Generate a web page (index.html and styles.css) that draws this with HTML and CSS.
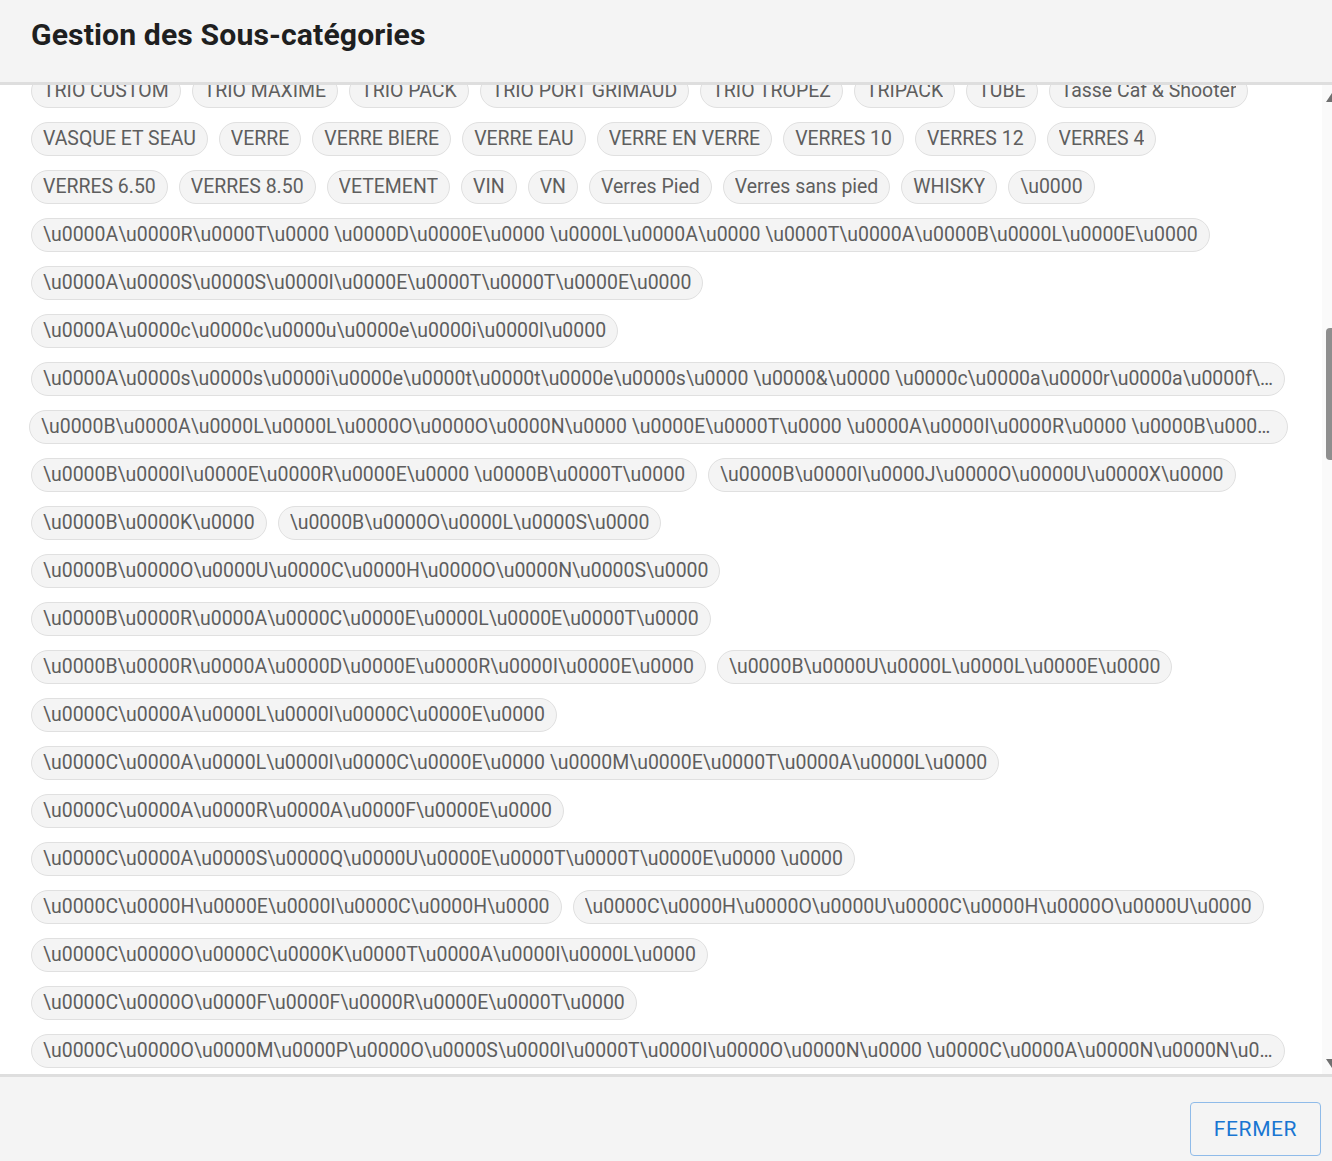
FILE: index.html
```html
<!DOCTYPE html>
<html lang="fr">
<head>
<meta charset="utf-8">
<title>Gestion des Sous-catégories</title>
<link rel="stylesheet" href="styles.css">
</head>
<body>
<div class="dialog">
  <header class="dialog-header">
    <h2 class="dialog-title">Gestion des Sous-catégories</h2>
  </header>
  <main class="dialog-content">
    <div class="chip-list">
      <div class="chip"><span class="chip-label">TRIO CUSTOM</span></div>
      <div class="chip"><span class="chip-label">TRIO MAXIME</span></div>
      <div class="chip"><span class="chip-label">TRIO PACK</span></div>
      <div class="chip"><span class="chip-label">TRIO PORT GRIMAUD</span></div>
      <div class="chip"><span class="chip-label">TRIO TROPEZ</span></div>
      <div class="chip"><span class="chip-label">TRIPACK</span></div>
      <div class="chip"><span class="chip-label">TUBE</span></div>
      <div class="chip"><span class="chip-label">Tasse Caf &amp; Shooter</span></div>
      <div class="chip"><span class="chip-label">VASQUE ET SEAU</span></div>
      <div class="chip"><span class="chip-label">VERRE</span></div>
      <div class="chip"><span class="chip-label">VERRE BIERE</span></div>
      <div class="chip"><span class="chip-label">VERRE EAU</span></div>
      <div class="chip"><span class="chip-label">VERRE EN VERRE</span></div>
      <div class="chip"><span class="chip-label">VERRES 10</span></div>
      <div class="chip"><span class="chip-label">VERRES 12</span></div>
      <div class="chip"><span class="chip-label">VERRES 4</span></div>
      <div class="chip"><span class="chip-label">VERRES 6.50</span></div>
      <div class="chip"><span class="chip-label">VERRES 8.50</span></div>
      <div class="chip"><span class="chip-label">VETEMENT</span></div>
      <div class="chip"><span class="chip-label">VIN</span></div>
      <div class="chip"><span class="chip-label">VN</span></div>
      <div class="chip"><span class="chip-label">Verres Pied</span></div>
      <div class="chip"><span class="chip-label">Verres sans pied</span></div>
      <div class="chip"><span class="chip-label">WHISKY</span></div>
      <div class="chip"><span class="chip-label">\u0000</span></div>
      <div class="chip"><span class="chip-label">\u0000A\u0000R\u0000T\u0000 \u0000D\u0000E\u0000 \u0000L\u0000A\u0000 \u0000T\u0000A\u0000B\u0000L\u0000E\u0000</span></div>
      <div class="chip"><span class="chip-label">\u0000A\u0000S\u0000S\u0000I\u0000E\u0000T\u0000T\u0000E\u0000</span></div>
      <div class="chip"><span class="chip-label">\u0000A\u0000c\u0000c\u0000u\u0000e\u0000i\u0000l\u0000</span></div>
      <div class="chip"><span class="chip-label">\u0000A\u0000s\u0000s\u0000i\u0000e\u0000t\u0000t\u0000e\u0000s\u0000 \u0000&amp;\u0000 \u0000c\u0000a\u0000r\u0000a\u0000f\u0000e\u0000s\u0000</span></div>
      <div class="chip chip--wide"><span class="chip-label">\u0000B\u0000A\u0000L\u0000L\u0000O\u0000O\u0000N\u0000 \u0000E\u0000T\u0000 \u0000A\u0000I\u0000R\u0000 \u0000B\u0000U\u0000L\u0000L\u0000E\u0000</span></div>
      <div class="chip"><span class="chip-label">\u0000B\u0000I\u0000E\u0000R\u0000E\u0000 \u0000B\u0000T\u0000</span></div>
      <div class="chip"><span class="chip-label">\u0000B\u0000I\u0000J\u0000O\u0000U\u0000X\u0000</span></div>
      <div class="chip"><span class="chip-label">\u0000B\u0000K\u0000</span></div>
      <div class="chip"><span class="chip-label">\u0000B\u0000O\u0000L\u0000S\u0000</span></div>
      <div class="chip"><span class="chip-label">\u0000B\u0000O\u0000U\u0000C\u0000H\u0000O\u0000N\u0000S\u0000</span></div>
      <div class="chip"><span class="chip-label">\u0000B\u0000R\u0000A\u0000C\u0000E\u0000L\u0000E\u0000T\u0000</span></div>
      <div class="chip"><span class="chip-label">\u0000B\u0000R\u0000A\u0000D\u0000E\u0000R\u0000I\u0000E\u0000</span></div>
      <div class="chip"><span class="chip-label">\u0000B\u0000U\u0000L\u0000L\u0000E\u0000</span></div>
      <div class="chip"><span class="chip-label">\u0000C\u0000A\u0000L\u0000I\u0000C\u0000E\u0000</span></div>
      <div class="chip"><span class="chip-label">\u0000C\u0000A\u0000L\u0000I\u0000C\u0000E\u0000 \u0000M\u0000E\u0000T\u0000A\u0000L\u0000</span></div>
      <div class="chip"><span class="chip-label">\u0000C\u0000A\u0000R\u0000A\u0000F\u0000E\u0000</span></div>
      <div class="chip"><span class="chip-label">\u0000C\u0000A\u0000S\u0000Q\u0000U\u0000E\u0000T\u0000T\u0000E\u0000 \u0000</span></div>
      <div class="chip"><span class="chip-label">\u0000C\u0000H\u0000E\u0000I\u0000C\u0000H\u0000</span></div>
      <div class="chip"><span class="chip-label">\u0000C\u0000H\u0000O\u0000U\u0000C\u0000H\u0000O\u0000U\u0000</span></div>
      <div class="chip"><span class="chip-label">\u0000C\u0000O\u0000C\u0000K\u0000T\u0000A\u0000I\u0000L\u0000</span></div>
      <div class="chip"><span class="chip-label">\u0000C\u0000O\u0000F\u0000F\u0000R\u0000E\u0000T\u0000</span></div>
      <div class="chip"><span class="chip-label">\u0000C\u0000O\u0000M\u0000P\u0000O\u0000S\u0000I\u0000T\u0000I\u0000O\u0000N\u0000 \u0000C\u0000A\u0000N\u0000N\u0000E\u0000L\u0000L\u0000E\u0000</span></div>
      <div class="chip"><span class="chip-label">\u0000C\u0000O\u0000N\u0000F\u0000I\u0000S\u0000E\u0000R\u0000I\u0000E\u0000</span></div>
    </div>
    <div class="scrollbar" aria-hidden="true">
      <span class="scroll-arrow scroll-arrow--up"></span>
      <span class="scroll-thumb"></span>
      <span class="scroll-arrow scroll-arrow--down"></span>
    </div>
  </main>
  <footer class="dialog-actions">
    <button class="btn-outlined" type="button">FERMER</button>
  </footer>
</div>
</body>
</html>
```

FILE: styles.css
```css
html, body {
  margin: 0;
  padding: 0;
  height: 100%;
  background: #ffffff;
}

body {
  font-family: Roboto, "Liberation Sans", Arial, sans-serif;
  overflow: hidden;
}

.dialog {
  display: flex;
  flex-direction: column;
  height: 100vh;
}

.dialog-header {
  flex: 0 0 auto;
  height: 82px;
  background: #f4f4f4;
  border-bottom: 3px solid #dedede;
  display: flex;
  align-items: center;
  padding: 0 31px;
  box-sizing: content-box;
  position: relative;
  z-index: 2;
}

.dialog-title {
  margin: 0 0 14px 0;
  font-size: 30.2px;
  font-weight: 700;
  color: #1f1f1f;
  letter-spacing: 0.1px;
}

.dialog-content {
  flex: 1 1 auto;
  position: relative;
  overflow: hidden;
  padding: 0 47px 0 31px;
}

/* list shown at its current scroll offset */
.chip-list {
  display: flex;
  flex-wrap: wrap;
  gap: 14px 11px;
  margin-top: -11px;
}

.chip {
  display: flex;
  align-items: center;
  box-sizing: border-box;
  height: 34px;
  max-width: 100%;
  min-width: 0;
  padding: 0 11px;
  border: 1px solid #e0e0e0;
  border-radius: 17px;
  background: #f4f4f4;
  color: #5e5e5e;
  font-size: 19.47px;
}

.chip--wide {
  flex: 0 0 auto;
  width: calc(100% + 5px);
  max-width: none;
  margin-left: -2px;
}

.chip-label {
  display: block;
  overflow: hidden;
  white-space: pre;
  text-overflow: ellipsis;
  line-height: 32px;
}

.scrollbar {
  position: absolute;
  top: 0;
  bottom: 0;
  right: 0;
  width: 10px;
  background: #fafafa;
}

.scroll-arrow {
  position: absolute;
  left: 4px;
  width: 0;
  height: 0;
  border-left: 6px solid transparent;
  border-right: 6px solid transparent;
}

.scroll-arrow--up {
  top: 8px;
  border-bottom: 9px solid #707070;
}

.scroll-arrow--down {
  bottom: 6px;
  border-top: 9px solid #707070;
}

.scroll-thumb {
  position: absolute;
  left: 4px;
  top: 243px;
  width: 12px;
  height: 132px;
  border-radius: 4px;
  background: #8e8e8e;
}

.dialog-actions {
  flex: 0 0 auto;
  display: flex;
  justify-content: flex-end;
  background: #f4f4f4;
  border-top: 3px solid #dedede;
  padding: 25px 11px 5px;
}

.btn-outlined {
  box-sizing: border-box;
  width: 131px;
  height: 54px;
  border: 1px solid #8fbbe9;
  border-radius: 4px;
  background: transparent;
  color: #1976d2;
  font-family: Roboto, "Liberation Sans", Arial, sans-serif;
  font-size: 21px;
  font-weight: 400;
  letter-spacing: 0.6px;
  cursor: pointer;
}
```
